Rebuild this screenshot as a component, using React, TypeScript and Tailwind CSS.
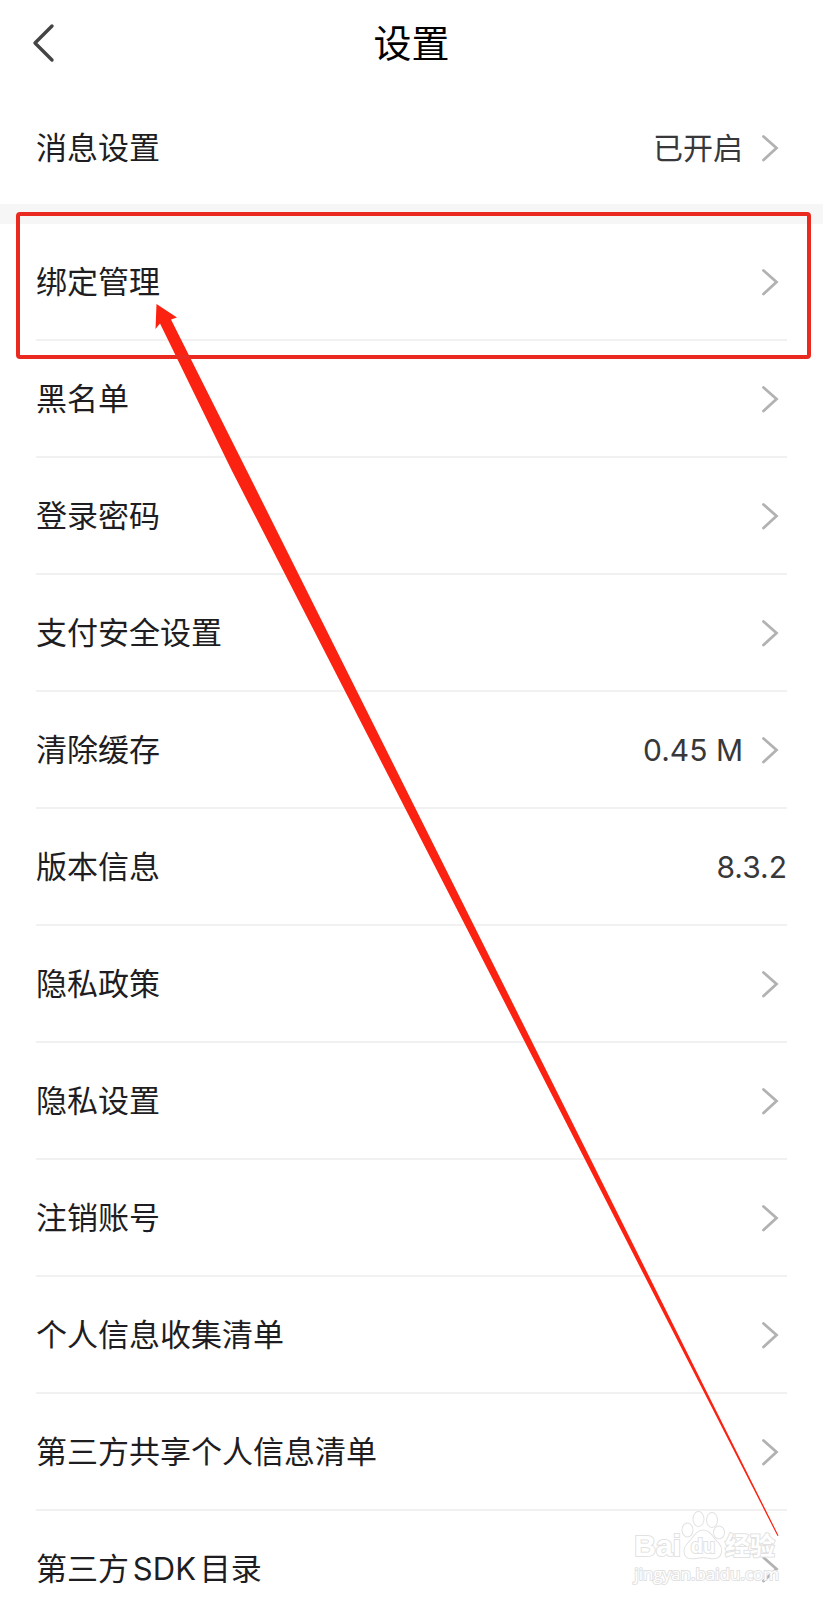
interface SettingItem {
  label: string;
  value?: string;
  arrow?: boolean;
  highlighted?: boolean;
}

const messageItem: SettingItem = { label: "消息设置", value: "已开启", arrow: true };

const items: SettingItem[] = [
  { label: "绑定管理", arrow: true, highlighted: true },
  { label: "黑名单", arrow: true },
  { label: "登录密码", arrow: true },
  { label: "支付安全设置", arrow: true },
  { label: "清除缓存", value: "0.45 M", arrow: true },
  { label: "版本信息", value: "8.3.2" },
  { label: "隐私政策", arrow: true },
  { label: "隐私设置", arrow: true },
  { label: "注销账号", arrow: true },
  { label: "个人信息收集清单", arrow: true },
  { label: "第三方共享个人信息清单", arrow: true },
  { label: "第三方SDK目录", arrow: true },
];

function ChevronRight() {
  return (
    <svg width="18" height="28" viewBox="0 0 18 28" fill="none" aria-hidden="true">
      <path d="M2.5 2.5 L15.5 14 L2.5 26" stroke="#b2b2b2" strokeWidth="2.8" strokeLinecap="round" />
    </svg>
  );
}

function SettingRow({ item }: { item: SettingItem }) {
  return (
    <button type="button" className="flex h-full w-full items-center justify-between text-left">
      <span className="text-[31px] leading-10 text-[#1d1d22] [text-autospace:normal]">{item.label}</span>
      <span className="flex items-center gap-[18px]">
        {item.value && (
          <span className="text-[30px] leading-10 text-[#38383a]">{item.value}</span>
        )}
        {item.arrow && (
          <span className="pr-2">
            <ChevronRight />
          </span>
        )}
      </span>
    </button>
  );
}

function Pointer() {
  return (
    <svg
      className="pointer-events-none absolute top-0 left-0"
      width="823"
      height="1600"
      viewBox="0 0 823 1600"
      aria-hidden="true"
    >
      <path
        d="M156.5 304 L177 317.5 L171 319.5 L246.5 470 L778.5 1535.5 L777.5 1536 L465.5 926 L231.5 470 L160 323.5 L155.5 329 Z"
        fill="#fb2212"
      />
    </svg>
  );
}

function Watermark() {
  return (
    <div className="pointer-events-none absolute right-11 bottom-3.5 flex flex-col items-start font-['Liberation_Sans','Noto_Sans_CJK_SC',sans-serif] text-white [-webkit-text-stroke:2px_#e2e2e2] [paint-order:stroke_fill]">
      <div className="flex items-end">
        <span className="text-[30px] leading-8 font-bold">Bai</span>
        <span className="relative flex h-12 w-11 items-end justify-center">
          <svg
            className="absolute bottom-0.5 left-0"
            width="44"
            height="50"
            viewBox="0 0 44 50"
            fill="#fff"
            stroke="#e2e2e2"
            strokeWidth="2"
            aria-hidden="true"
          >
            <ellipse cx="6.5" cy="20" rx="5" ry="6.5" />
            <ellipse cx="17.5" cy="9" rx="5" ry="7" />
            <ellipse cx="31" cy="10" rx="5" ry="7" />
            <ellipse cx="38" cy="22.5" rx="5" ry="6" />
            <path d="M22 20.5 C28 20.5 31 26 34 30 C38 34 41 37 40 42 C39 48 34 49 29 48 C25 47 19 47 15 48 C9 49 4 48 3.5 42 C3 36 8 33 11 29 C14 25 17 20.5 22 20.5 Z" />
          </svg>
          <span className="relative text-xl leading-8 font-bold">du</span>
        </span>
        <span className="text-[25px] leading-8 font-bold">经验</span>
      </div>
      <span className="font-['Open_Sans',sans-serif] text-[17px] leading-6">jingyan.baidu.com</span>
    </div>
  );
}

export default function App() {
  return (
    <main className="relative h-screen overflow-hidden bg-white font-['Inter','Noto_Sans_CJK_SC',sans-serif]">
      <header className="grid h-[86px] grid-cols-[1fr_auto_1fr] items-center px-8">
        <button type="button" aria-label="返回" className="justify-self-start">
          <svg width="24" height="40" viewBox="0 0 24 40" fill="none" aria-hidden="true">
            <path
              d="M20 3 L3 20 L20 37"
              stroke="#444"
              strokeWidth="3.4"
              strokeLinecap="round"
              strokeLinejoin="round"
            />
          </svg>
        </button>
        <h1 className="text-[38px] leading-12 text-black">设置</h1>
      </header>

      <section className="h-[118px] px-9 pt-1.5">
        <SettingRow item={messageItem} />
      </section>

      <div className="h-5 bg-[#f6f6f6]" />

      <ul className="px-9">
        {items.map((item) => (
          <li key={item.label} className="relative h-[117px] border-b-2 border-[#f1f1f1]">
            <SettingRow item={item} />
            {item.highlighted && (
              <div className="pointer-events-none absolute -top-3 -right-6 -bottom-5 -left-5 z-10 rounded-sm border-4 border-[#ea2a20]" />
            )}
          </li>
        ))}
      </ul>

      <Watermark />
      <Pointer />
    </main>
  );
}
